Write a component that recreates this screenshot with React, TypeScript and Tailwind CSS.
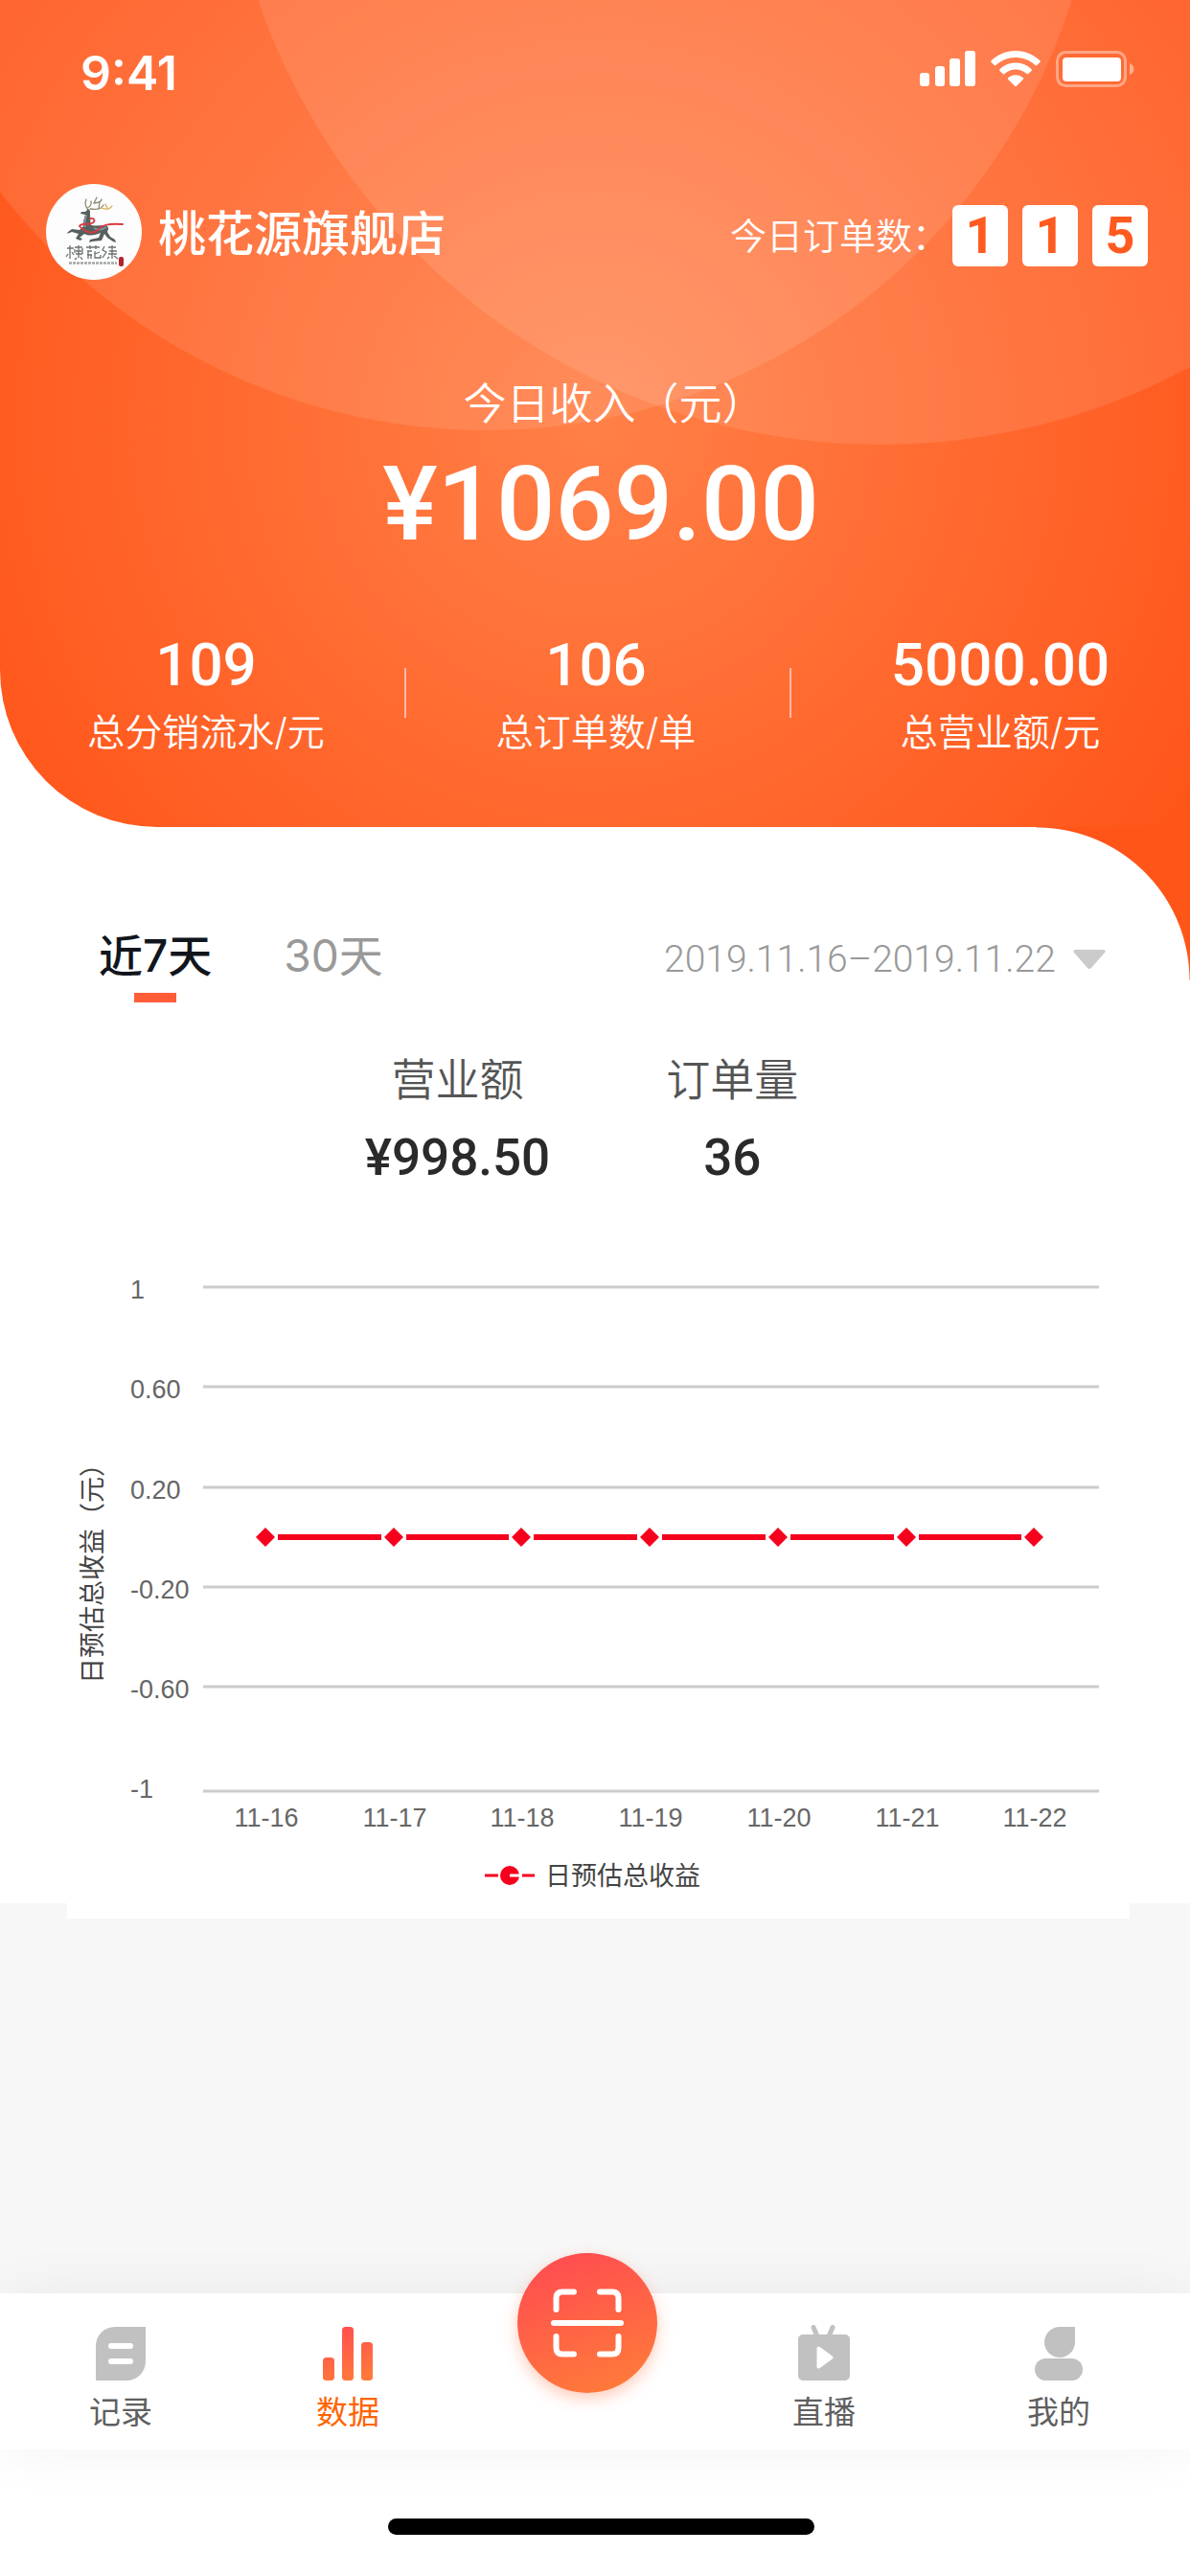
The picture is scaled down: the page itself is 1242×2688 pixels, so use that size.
import type { ReactNode } from "react";

const stats = [
  { value: "109", label: "总分销流水/元", pad: "pl-2" },
  { value: "106", label: "总订单数/单", pad: "pr-1" },
  { value: "5000.00", label: "总营业额/元", pad: "pl-5" },
];

const gridRows = [
  { label: "1", y: 103 },
  { label: "0.60", y: 207 },
  { label: "0.20", y: 312 },
  { label: "-0.20", y: 416 },
  { label: "-0.60", y: 520 },
  { label: "-1", y: 629 },
];

const days = ["11-16", "11-17", "11-18", "11-19", "11-20", "11-21", "11-22"].map(
  (label, i) => ({ label, x: 207 + Math.round(i * 133.7) }),
);

function StatusIcons() {
  return (
    <div className="flex items-center gap-4 pb-2" aria-hidden="true">
      <svg width="58" height="38" viewBox="0 0 58 38" fill="#fff">
        <rect x="0" y="23" width="10" height="14" rx="3" />
        <rect x="16" y="16" width="10" height="21" rx="3" />
        <rect x="31" y="8" width="11" height="29" rx="3" />
        <rect x="47" y="0" width="11" height="37" rx="3" />
      </svg>
      <svg width="52" height="38" viewBox="0 0 52 38" fill="#fff">
        <path d="M26 0C35.800 0 44.800 3.800 51.400 10.200Q52.300 11.100 51.400 12L48.300 15.100Q47.500 15.900 46.600 15.100C41.200 9.900 34 6.900 26 6.900S10.800 9.900 5.400 15.100Q4.500 15.900 3.700 15.100L.6 12Q-.3 11.100.6 10.200C7.200 3.800 16.200 0 26 0Z" />
        <path d="M26 12.500C32.400 12.500 38.200 15 42.500 19.100Q43.300 20 42.500 20.900L39.300 24.100Q38.500 24.900 37.600 24.100C34.600 21.200 30.500 19.400 26 19.400S17.400 21.200 14.400 24.100Q13.500 24.900 12.700 24.100L9.500 20.900Q8.700 20 9.500 19.100C13.800 15 19.600 12.500 26 12.500Z" />
        <path d="M26 25.200C29 25.200 31.700 26.300 33.700 28.100Q34.600 29 33.700 29.900L26.900 36.800Q26 37.600 25.100 36.800L18.300 29.900Q17.400 29 18.300 28.100C20.300 26.300 23 25.200 26 25.200Z" />
      </svg>
      <svg width="82" height="38" viewBox="0 0 82 38">
        <rect x="1.500" y="1.500" width="71" height="35" rx="9" fill="none" stroke="#fff" strokeOpacity=".4" strokeWidth="3" />
        <rect x="7" y="7" width="61" height="25" rx="4" fill="#fff" />
        <path d="M77 13C79.800 14.200 81.500 16.400 81.500 19S79.800 23.800 77 25Z" fill="#fff" fillOpacity=".45" />
      </svg>
    </div>
  );
}

function ShopLogo() {
  return (
    <svg className="size-[100px] shrink-0" viewBox="0 0 100 100" role="img" aria-label="桃花源">
      <circle cx="50" cy="50" r="50" fill="#fcfdfc" />
      <g fill="none" stroke="#8f8a72" strokeWidth="1.300" strokeLinecap="round">
        <path d="M44 27C40 22 41 19 42 16M43 25C46 24 48 21 47 18M46 26C52 27 58 26 60 22M50 20L53 14M55 26L56 19M50 20C54 19 57 20 58 16" />
        <path d="M58 25C63 27 67 26 69 23M62 21L64 25" stroke="#d5b152" />
      </g>
      <path
        d="M44 26L41 29 37 29 36 31 41 32C40 36 38 40 39 44L35 48 27 47 23 50 22 52 27 50 34 52 31 57 36 59 38 57 35 56 40 52C46 55 52 53 57 51L55 56 46 58 45 61 48 60 58 59 61 52 64 56 70 60 73 61 72 58 67 55 64 50C66 46 65 44 62 43C57 43 51 44 47 43C46 38 46 33 46 28Z"
        fill="#56615f"
      />
      <path d="M42 32C41 37 39 41 41 45M50 46C55 49 60 47 63 45" stroke="#7f96a0" strokeWidth="2" fill="none" />
      <path
        d="M46 36C51 35 52 39 48 41C44 43 37 40 35 44C40 50 49 53 54 48C58 43 64 41 80 42"
        stroke="#d93a3f"
        strokeWidth="1.800"
        fill="none"
        strokeLinecap="round"
      />
      <g stroke="#6d7173" strokeWidth="1.300" fill="none">
        <path d="M22 67H29M25 64V78M23 73L21 76M27 71L29 74M30 66H38M31 70H37M34 64V77M31 73H38M32 77L30 79M36 76L38 79M30 68V72M38 67V73" />
        <path d="M42 66H56M46 64V68M52 64V68M43 70H48M44 70V78M43 74H48M51 70V77H57V74M51 73L56 71M47 73V78" />
        <path d="M61 65L59 69 63 71 59 77M65 66H73M66 70H74M69 64V78M65 73H74M66 76L64 78M71 75L75 78" />
      </g>
      <path d="M24 82.500H74" stroke="#a5a7a7" strokeWidth="2.400" strokeDasharray="3 1" />
      <rect x="76" y="76" width="5" height="10" rx="2" fill="#b5222b" />
    </svg>
  );
}

function Chart() {
  return (
    <svg viewBox="0 0 1109 762" className="block h-auto w-full" role="img" aria-label="日预估总收益">
      <g fontFamily="'Liberation Sans', Arial, sans-serif" fontSize="27" fill="#666">
        {gridRows.map((row) => (
          <g key={row.label}>
            <line x1="142" x2="1077" y1={row.y} y2={row.y} stroke="#cccccc" strokeWidth="3" />
            <text x="66" y={row.label === "-1" ? row.y + 7 : row.y + 12}>
              {row.label}
            </text>
          </g>
        ))}
        {days.map((day) => (
          <text key={day.label} x={day.x + 1} y="666" textAnchor="middle">
            {day.label}
          </text>
        ))}
      </g>
      {days.slice(1).map((day, i) => (
        <line
          key={day.label}
          x1={days[i].x + 13}
          x2={day.x - 13}
          y1="364"
          y2="364"
          stroke="#f5001d"
          strokeWidth="6"
        />
      ))}
      {days.map((day) => (
        <path key={day.label} d={`M${day.x - 10} 364l10 -10l10 10l-10 10z`} fill="#f5001d" />
      ))}
      <g fontFamily="'Noto Sans CJK SC', sans-serif" fontSize="27" fill="#444">
        <text transform="translate(36 517) rotate(-90)">日预估总收益（元）</text>
        <text x="499" y="727">
          日预估总收益
        </text>
      </g>
      <g stroke="#f5001d" strokeWidth="3">
        <line x1="436" x2="450" y1="717" y2="717" />
        <line x1="475" x2="488" y1="717" y2="717" />
      </g>
      <circle cx="462" cy="717" r="10" fill="#f5001d" />
      <line x1="462" x2="472" y1="717" y2="717" stroke="#fff" strokeWidth="3" />
    </svg>
  );
}

function RecordIcon() {
  return (
    <svg width="52" height="56" viewBox="0 0 52 56" aria-hidden="true">
      <path d="M20 0H52V36A20 20 0 0 1 32 56H0V20A20 20 0 0 1 20 0Z" fill="#c1c1c1" />
      <path d="M16 20H36M16 36H36" stroke="#fff" strokeWidth="6" strokeLinecap="round" />
    </svg>
  );
}

function DataIcon() {
  return (
    <svg width="52" height="56" viewBox="0 0 52 56" aria-hidden="true">
      <defs>
        <linearGradient id="bars" gradientUnits="userSpaceOnUse" x1="16" y1="0" x2="32" y2="56">
          <stop offset="0" stopColor="#ff4e50" />
          <stop offset="1" stopColor="#ff793a" />
        </linearGradient>
      </defs>
      <g fill="url(#bars)">
        <rect x="0" y="32" width="12" height="24" rx="3.500" />
        <rect x="20" y="0" width="12" height="56" rx="3.500" />
        <rect x="40" y="16" width="12" height="40" rx="3.500" />
      </g>
    </svg>
  );
}

function LiveIcon() {
  return (
    <svg width="56" height="58" viewBox="0 0 56 58" className="-mt-0.5" aria-hidden="true">
      <path d="M17 2.500L21 12M37 2.500L33 12" stroke="#c1c1c1" strokeWidth="5" strokeLinecap="round" />
      <rect x="1" y="10" width="54" height="48" rx="5" fill="#c1c1c1" />
      <path d="M22.500 24.500L35.500 34L22.500 43.500Z" fill="#fff" stroke="#fff" strokeWidth="4" strokeLinejoin="round" />
    </svg>
  );
}

function MineIcon() {
  return (
    <svg width="52" height="56" viewBox="0 0 52 56" fill="#c1c1c1" aria-hidden="true">
      <path d="M27 0H43V16A16 16 0 1 1 27 0Z" />
      <rect x="1" y="33" width="50" height="23" rx="11.500" />
    </svg>
  );
}

function NavItem({ icon, label, active = false }: { icon: ReactNode; label: string; active?: boolean }) {
  return (
    <a
      href="#"
      aria-current={active ? "page" : undefined}
      className={
        active
          ? "flex flex-col items-center gap-[9px] pt-[35px] text-[#ff6400]"
          : "flex flex-col items-center gap-[9px] pt-[35px] text-[#5f5f5f]"
      }
    >
      {icon}
      <span className="text-[33px] leading-[48px]">{label}</span>
    </a>
  );
}

export default function App() {
  return (
    <div className="flex min-h-screen flex-col bg-[#f7f7f7] font-['Inter','Noto_Sans_CJK_SC',sans-serif]">
      <div className="bg-white">
        <header className="relative overflow-hidden rounded-bl-[164px] bg-[radial-gradient(circle_740px_at_50%_440px,#ff8048,#ff5519)] pb-[75px] text-white">
          <div className="absolute -top-[833px] left-[calc(50%-755px)] size-[1282px] rounded-full bg-white/10" />
          <div className="absolute -top-[910px] left-[calc(50%-389px)] size-[1374px] rounded-full bg-white/10" />

          <div className="relative">
            <div className="flex h-[152px] items-center justify-between pr-[58px] pl-[84px]">
              <time className="text-[50px] leading-[60px] font-semibold">9:41</time>
              <StatusIcons />
            </div>

            <div className="mt-10 flex items-center justify-between pr-11 pl-12">
              <div className="flex items-center gap-[17px]">
                <ShopLogo />
                <h1 className="pt-1 text-[50px] leading-[64px] font-medium">桃花源旗舰店</h1>
              </div>
              <div className="flex items-center pt-2">
                <span className="text-[38px] leading-[64px] font-[350]">今日订单数：</span>
                <div className="ml-1 flex gap-[15px] font-['Roboto',sans-serif] text-[54px] leading-[64px] font-bold text-[#ff5a1f]">
                  {["1", "1", "5"].map((digit, i) => (
                    <span key={i} className="w-[58px] rounded-md bg-white text-center">
                      {digit}
                    </span>
                  ))}
                </div>
              </div>
            </div>

            <div className="mt-24 text-center">
              <p className="pl-10 text-[45px] leading-[68px] font-[350]">今日收入（元）</p>
              <p className="mt-[6px] pl-3 font-['Roboto',sans-serif] text-[108px] leading-[128px] font-medium">
                ¥1069.00
              </p>
            </div>

            <div className="mt-[68px] grid grid-cols-[422fr_402fr_418fr] text-center">
              {stats.map((stat, i) => (
                <div key={stat.label} className="flex items-center">
                  {i > 0 && <span className="h-13 w-[2px] bg-[#ffb8b0]" />}
                  <div className={`flex-1 ${stat.pad}`}>
                    <p className="font-['Roboto',sans-serif] text-[62px] leading-[72px] font-medium">{stat.value}</p>
                    <p className="mt-[10px] text-[39px] leading-[48px] font-[350]">{stat.label}</p>
                  </div>
                </div>
              ))}
            </div>
          </div>
        </header>
      </div>

      <main className="flex-1">
        <section className="relative flex flex-col bg-white pt-[102px]">
          <div className="absolute top-0 right-0 size-40 bg-[radial-gradient(circle_at_bottom_left,transparent_159px,#ff5519_160px)]" />

          <div className="flex items-start justify-between pr-[88px] pl-[103px]">
            <div className="flex gap-[75px] text-[46px]" role="tablist">
              <button role="tab" aria-selected="true" className="flex flex-col items-center gap-[7px] text-[#11151c]">
                <span className="leading-[64px] font-medium">近7天</span>
                <span className="h-[10px] w-11 bg-[#ff5d38]" />
              </button>
              <button role="tab" aria-selected="false" className="self-start leading-[64px] text-[#999]">
                30天
              </button>
            </div>
            <label className="flex items-center gap-[18px] text-[#999]">
              <select
                aria-label="日期范围"
                className="appearance-none bg-transparent font-['Roboto',sans-serif] text-[39px] leading-[72px] font-light"
              >
                <option>2019.11.16–2019.11.22</option>
              </select>
              <svg width="34" height="20" viewBox="0 0 34 20" aria-hidden="true">
                <path d="M2 0H32Q35 1 33 3L19 19Q17 21 15 19L1 3Q-1 1 2 0Z" fill="#cbcbcb" />
              </svg>
            </label>
          </div>

          <dl className="mt-12 flex justify-center gap-[121px] pr-7 text-center">
            {[
              ["营业额", "¥998.50"],
              ["订单量", "36"],
            ].map(([label, value]) => (
              <div key={label} className="flex flex-col gap-[18px]">
                <dt className="text-[46px] leading-[64px] font-[350] text-[#555]">{label}</dt>
                <dd className="font-['Roboto',sans-serif] text-[53px] leading-[64px] font-medium text-[#2a2a2a]">
                  {value}
                </dd>
              </div>
            ))}
          </dl>

          <div className="relative -mb-4 mr-[63px] ml-[70px] bg-white">
            <Chart />
          </div>
        </section>
      </main>

      <footer className="relative">
        <nav className="relative z-10 grid h-[163px] grid-cols-[252fr_222fr_278fr_216fr_274fr] bg-white shadow-[0_0_60px_rgba(0,0,0,0.06)]">
          <NavItem icon={<RecordIcon />} label="记录" />
          <NavItem icon={<DataIcon />} label="数据" active />
          <div className="flex justify-center">
            <button
              aria-label="扫一扫"
              className="-mt-[42px] flex size-[146px] items-center justify-center rounded-full bg-[linear-gradient(160deg,#ff4e50_10%,#ff793a_90%)] shadow-[0_6px_16px_rgba(255,110,60,0.35)]"
            >
              <svg
                width="76"
                height="72"
                viewBox="0 0 76 72"
                fill="none"
                stroke="#fff"
                strokeWidth="6"
                strokeLinecap="round"
                aria-hidden="true"
              >
                <path d="M5.500 22V10Q5.500 3.500 12 3.500H24M51 3.500H64Q70.500 3.500 70.500 10V22M70.500 50V62Q70.500 68.500 64 68.500H51M24 68.500H12Q5.500 68.500 5.500 62V50M3 36H73" />
              </svg>
            </button>
          </div>
          <NavItem icon={<LiveIcon />} label="直播" />
          <NavItem icon={<MineIcon />} label="我的" />
        </nav>
        <div className="flex h-[132px] justify-center bg-white pt-[72px] pl-3">
          <span className="h-[17px] w-[445px] rounded-full bg-black" />
        </div>
      </footer>
    </div>
  );
}
